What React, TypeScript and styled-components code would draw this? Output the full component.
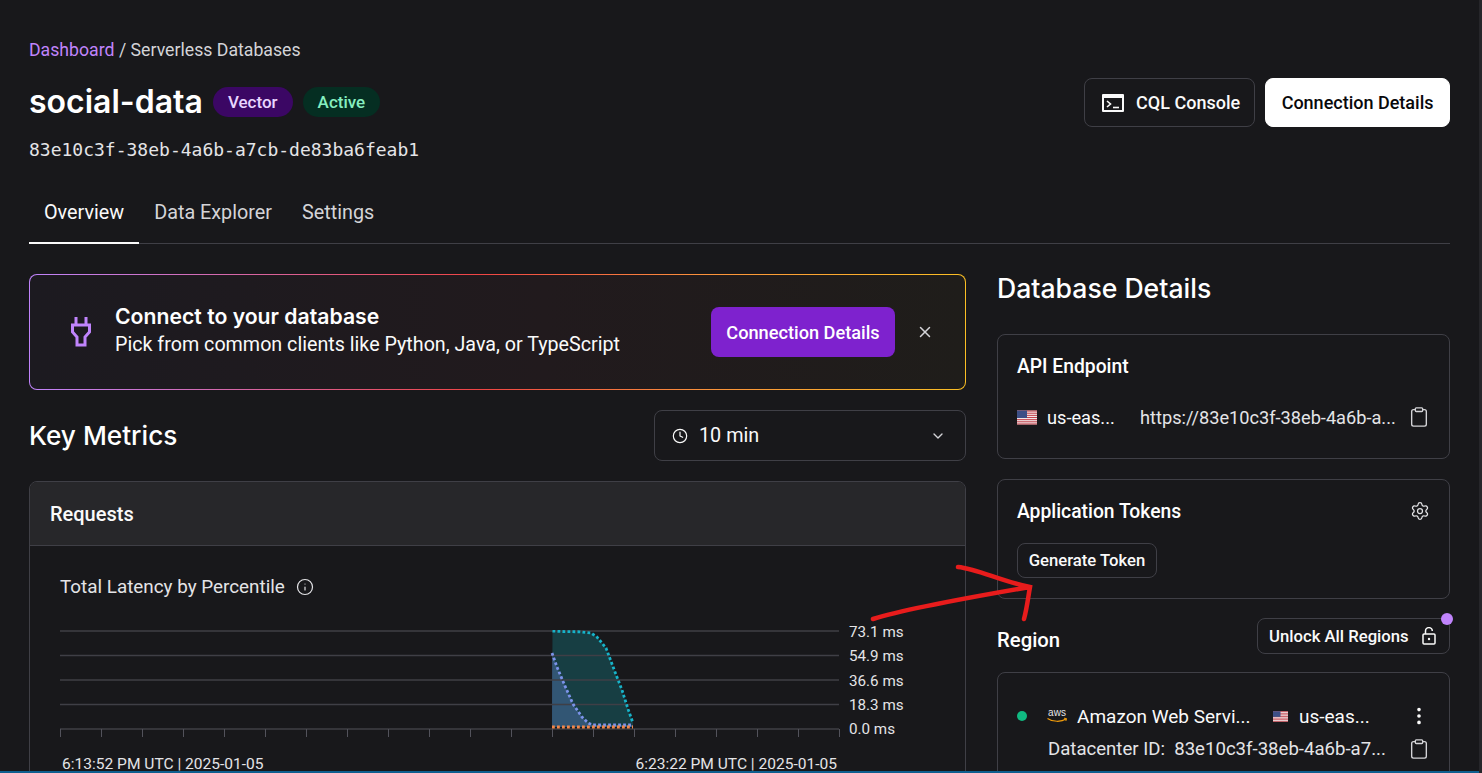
import React from 'react';
import styled, { createGlobalStyle } from 'styled-components';
import { ChevronDown, Clipboard, Clock, EllipsisVertical, Info, Settings, X } from 'lucide-react';

const GlobalStyle = createGlobalStyle`
  html, body {
    margin: 0;
    padding: 0;
    background: #18181b;
    overflow: hidden;
  }
  * {
    box-sizing: border-box;
  }
`;

const Page = styled.div`
  position: relative;
  width: 1482px;
  height: 773px;
  overflow: hidden;
  padding: 40px 32px 0 29px;
  background: #18181b;
  color: #fafafa;
  font-family: Roboto, "Liberation Sans", sans-serif;
`;

const BottomStrip = styled.div`
  position: absolute;
  left: 0;
  right: 0;
  bottom: 0;
  height: 2px;
  background: #0f5f8f;
`;

const RightStrip = styled.div`
  position: absolute;
  top: 0;
  right: 0;
  bottom: 0;
  width: 3px;
  background: #26262a;
`;

const Breadcrumb = styled.div`
  font-size: 17.7px;
  line-height: 20px;
  color: #d4d4d8;
`;

const Crumb = styled.span`
  color: #c084fc;
`;

const HeaderRow = styled.div`
  display: flex;
  justify-content: space-between;
  align-items: flex-start;
  margin-top: 17px;
`;

const TitleBlock = styled.div`
  display: flex;
  flex-direction: column;
`;

const TitleRow = styled.div`
  display: flex;
  align-items: center;
  gap: 10px;
  height: 30px;
  margin-top: 10px;
`;

const Title = styled.h1`
  margin: 0;
  font-family: Inter, sans-serif;
  font-size: 32px;
  line-height: 30px;
  font-weight: 600;
  color: #fff;
`;

const Badge = styled.span<{ $bg: string; $fg: string }>`
  display: inline-flex;
  align-items: center;
  height: 30px;
  padding: 0 15px;
  border-radius: 15px;
  background: ${p => p.$bg};
  color: ${p => p.$fg};
  font-size: 17px;
  font-weight: 500;
`;

const DbId = styled.div`
  margin-top: 22px;
  font-family: "DejaVu Sans Mono", "Liberation Mono", monospace;
  font-size: 18px;
  line-height: 22px;
  color: #e4e4e7;
`;

const HeaderActions = styled.div`
  display: flex;
  gap: 10px;
  margin-top: 1px;
`;

const HeaderButton = styled.button<{ $solid?: boolean }>`
  display: flex;
  align-items: center;
  justify-content: center;
  gap: 12px;
  height: 49px;
  padding: ${p => (p.$solid ? '0 15.5px' : '0 14px 0 17px')};
  border: 1px solid ${p => (p.$solid ? '#fff' : '#3f3f46')};
  border-radius: 8px;
  background: ${p => (p.$solid ? '#fff' : 'transparent')};
  color: ${p => (p.$solid ? '#09090b' : '#fafafa')};
  font-family: inherit;
  font-size: 18px;
  font-weight: 500;
`;

const Tabs = styled.nav`
  display: flex;
  margin-top: 21px;
  height: 62px;
  border-bottom: 1px solid #3f3f46;
`;

const Tab = styled.div<{ $active?: boolean }>`
  display: flex;
  align-items: center;
  height: 62px;
  padding: 0 15px;
  font-size: 19.8px;
  color: ${p => (p.$active ? '#fafafa' : '#d4d4d8')};
  border-bottom: 2px solid ${p => (p.$active ? '#fafafa' : 'transparent')};
`;

const Columns = styled.div`
  display: grid;
  grid-template-columns: 937px 453px;
  column-gap: 31px;
  margin-top: 30px;
`;

const LeftColumn = styled.section`
  display: flex;
  flex-direction: column;
`;

const RightColumn = styled.aside`
  display: flex;
  flex-direction: column;
`;

const Banner = styled.div`
  display: flex;
  align-items: center;
  height: 116px;
  padding: 0 31px 0 40px;
  border: 1px solid transparent;
  border-radius: 8px;
  background:
    linear-gradient(90deg, #1c1a20, #211a1d 55%, #1f1d1a) padding-box,
    linear-gradient(90deg, #c084fc, #ef4444 48%, #fb923c 72%, #fbbf24) border-box;
`;

const BannerText = styled.div`
  flex: 1;
  margin-left: 23px;
  margin-top: -2px;
`;

const BannerTitle = styled.div`
  font-family: Inter, sans-serif;
  font-size: 21.2px;
  line-height: 26px;
  margin-bottom: 2px;
  font-weight: 600;
  color: #fff;
`;

const BannerBody = styled.div`
  font-size: 19.7px;
  line-height: 28px;
  color: #fafafa;
`;

const BannerButton = styled.button`
  height: 50px;
  width: 184px;
  border: none;
  border-radius: 8px;
  background: #7e22ce;
  color: #fff;
  font-family: inherit;
  font-size: 18.2px;
  font-weight: 500;
`;

const CloseSlot = styled.div`
  display: flex;
  margin-left: 21px;
  color: #d4d4d8;
`;

const MetricsBar = styled.div`
  display: flex;
  justify-content: space-between;
  align-items: center;
  margin-top: 20px;
`;

const SectionTitle = styled.h2`
  margin: 0;
  font-family: Inter, sans-serif;
  font-size: 26.2px;
  line-height: 32px;
  font-weight: 500;
  color: #fff;
`;

const RangeSelect = styled.div`
  display: flex;
  align-items: center;
  width: 312px;
  height: 51px;
  padding: 0 19px 0 17px;
  border: 1px solid #3f3f46;
  border-radius: 8px;
  font-size: 19.8px;
  color: #fafafa;
`;

const RangeLabel = styled.span`
  flex: 1;
  margin-left: 11px;
`;

const Panel = styled.div`
  margin-top: 20px;
  height: 340px;
  border: 1px solid #3f3f46;
  border-radius: 8px 8px 0 0;
`;

const PanelHead = styled.div`
  display: flex;
  align-items: center;
  height: 64px;
  padding: 0 20px;
  background: #27272a;
  border-bottom: 1px solid #3f3f46;
  border-radius: 7px 7px 0 0;
  font-size: 20px;
  font-weight: 500;
  color: #fafafa;
`;

const PanelBody = styled.div`
  padding: 30px 30px 0;
`;

const ChartTitle = styled.div`
  display: flex;
  align-items: center;
  gap: 11px;
  height: 22px;
  font-size: 18.85px;
  color: #e4e4e7;
`;

const ChartRow = styled.div`
  display: flex;
  margin-top: 32px;
  height: 118px;
`;

const YLabels = styled.div`
  display: flex;
  flex-direction: column;
  justify-content: space-between;
  width: 70px;
  margin-left: 9px;
  margin-top: -8px;
  height: 117px;
  font-size: 15.2px;
  line-height: 20px;
  color: #e4e4e7;
`;

const TimeLabels = styled.div`
  display: flex;
  justify-content: space-between;
  width: 775px;
  margin-left: 2px;
  margin-top: 7px;
  font-size: 15.55px;
  line-height: 18px;
  color: #e4e4e7;
`;

const DetailsTitle = styled(SectionTitle)`
  font-size: 26.6px;
  margin-top: -2px;
`;

const Card = styled.div`
  margin-top: 20px;
  padding: 20px 19px;
  border: 1px solid #3f3f46;
  border-radius: 8px;
`;

const ApiCard = styled(Card)`
  margin-top: 30px;
  height: 125px;
`;

const TokenCard = styled(Card)`
  height: 120px;
`;

const CardHead = styled.div`
  display: flex;
  justify-content: space-between;
  align-items: center;
  height: 22px;
  font-size: 19.3px;
  font-weight: 500;
  color: #fff;
`;

const EndpointRow = styled.div`
  display: flex;
  align-items: center;
  margin-top: 28px;
  height: 24px;
  font-size: 18.2px;
  color: #fafafa;
`;

const RegionName = styled.span`
  margin-left: 10px;
  width: 93px;
`;

const EndpointUrl = styled.span`
  flex: 1;
  color: #e4e4e7;
  white-space: nowrap;
`;

const GenerateButton = styled.button`
  display: block;
  margin-top: 21px;
  height: 35px;
  width: 140px;
  padding: 0;
  border: 1px solid #3f3f46;
  border-radius: 8px;
  background: transparent;
  color: #fafafa;
  font-family: inherit;
  font-size: 16.7px;
  font-weight: 500;
`;

const RegionHead = styled.div`
  display: flex;
  justify-content: space-between;
  align-items: flex-start;
  margin-top: 19px;
`;

const RegionTitle = styled.h3`
  margin: 10px 0 0;
  font-size: 20.3px;
  line-height: 24px;
  font-weight: 500;
  color: #fff;
`;

const UnlockButton = styled.button`
  position: relative;
  display: flex;
  align-items: center;
  gap: 13px;
  width: 193px;
  height: 36px;
  padding: 0 11px;
  border: 1px solid #3f3f46;
  border-radius: 8px;
  background: transparent;
  color: #fafafa;
  font-family: inherit;
  font-size: 16.7px;
  font-weight: 500;
  white-space: nowrap;
`;

const NoticeDot = styled.span`
  position: absolute;
  top: -6px;
  right: -4px;
  width: 12px;
  height: 12px;
  border-radius: 50%;
  background: #c084fc;
`;

const RegionCard = styled(Card)`
  margin-top: 18px;
  height: 140px;
  padding: 31px 19px 0;
`;

const ProviderRow = styled.div`
  display: flex;
  align-items: center;
  height: 24px;
  font-size: 19px;
  color: #fafafa;
`;

const StatusDot = styled.span`
  width: 10px;
  height: 10px;
  margin-right: 20px;
  border-radius: 50%;
  background: #10b981;
`;

const ProviderName = styled.span`
  width: 196px;
  margin-left: 10px;
`;

const RegionShort = styled.span`
  flex: 1;
  margin-left: 11px;
`;

const DatacenterRow = styled.div`
  display: flex;
  align-items: center;
  height: 24px;
  margin-top: 9px;
  margin-left: 31px;
  font-size: 18.6px;
  color: #e4e4e7;
`;

const DatacenterText = styled.span`
  flex: 1;
  white-space: nowrap;
`;

const Annotation = styled.svg`
  position: absolute;
  left: 0;
  top: 0;
  pointer-events: none;
`;

const TerminalIcon = () => (
  <svg width="22" height="18" viewBox="0 0 22 18">
    <path fill="#fafafa" d="M1 0h20a1 1 0 0 1 1 1v16a1 1 0 0 1-1 1H1a1 1 0 0 1-1-1V1a1 1 0 0 1 1-1zm1 4v12h18V4z" />
    <path d="M5 7l3.5 3L5 13" fill="none" stroke="#fafafa" strokeWidth="1.6" />
    <path d="M11 13.5h6" fill="none" stroke="#fafafa" strokeWidth="1.6" />
  </svg>
);

const PlugIcon = () => (
  <svg width="22" height="32" viewBox="0 0 22 32" fill="none" stroke="#c084fc" strokeWidth="3" style={{ flexShrink: 0 }}>
    <path d="M6 1v8M16 1v8" />
    <path d="M2.500 9h17v7l-4.500 5v8H7v-8l-4.500-5z" />
  </svg>
);

const UsFlag = ({ width, height }: { width: number; height: number }) => (
  <svg width={width} height={height} viewBox="0 0 20 14" style={{ flexShrink: 0 }}>
    <rect width="20" height="14" fill="#f4f0f0" />
    {[0, 2.15, 4.3, 6.45, 8.6, 10.75, 12.9].map(y => (
      <rect key={y} y={y} width="20" height="1.1" fill="#c2454f" />
    ))}
    <rect width="10" height="7.5" fill="#3d4f86" />
  </svg>
);

const AwsLogo = () => (
  <svg width="20" height="16" viewBox="0 0 20 16" style={{ flexShrink: 0 }}>
    <text x="10" y="8" textAnchor="middle" fontFamily="Liberation Sans, sans-serif" fontSize="10" fill="#e4e4e7">aws</text>
    <path d="M0.500 10.500c5 3.600 14 3.600 18.500 .6" fill="none" stroke="#f59e0b" strokeWidth="1.2" />
    <path d="M17 10.200l2.600 .4-.8 2.400" fill="none" stroke="#f59e0b" strokeWidth="1" />
  </svg>
);

const OpenLock = () => (
  <svg width="14" height="18" viewBox="0 0 14 18" fill="none" stroke="#fafafa" strokeWidth="1.5" style={{ flexShrink: 0 }}>
    <rect x="1" y="7" width="12" height="10" rx="1" />
    <path d="M3.500 7V4a3.400 3.400 0 0 1 6.800 0" />
    <circle cx="7" cy="12" r="1.200" fill="#fafafa" stroke="none" />
  </svg>
);

// chart spans x 60-839 on the page, the svg starts at x 60
const gridY = [1, 25.5, 50, 74.5, 99];
const tickX = Array.from({ length: 20 }, (_, i) => i * 41);

const teal = '492.5,1 505,1.6 520,1.8 531,3 537,7 546,18 555,42 562,60 568,79 573,93';
const blue = '492,23 497,37 505,56 513,74 522,87 528,93 533,95 573,95';

const LatencyChart = () => (
  <svg width="780" height="118" viewBox="0 0 780 118" style={{ flexShrink: 0 }}>
    <polygon points={`${teal} 573,97 492,97`} fill="#14b8c4" fillOpacity="0.24" />
    <polygon points={`${blue} 573,97 492,97`} fill="#6f8fe8" fillOpacity="0.3" />
    {gridY.map(y => (
      <line key={y} x1="0" x2="779" y1={y} y2={y} stroke="#3f3f46" strokeWidth="1.5" />
    ))}
    {tickX.map(x => (
      <line key={x} x1={x + 0.5} x2={x + 0.5} y1="99" y2="107" stroke="#52525b" strokeWidth="1" />
    ))}
    <polyline points={teal} fill="none" stroke="#17b3c9" strokeWidth="2.8" strokeDasharray="2.8 2.2" />
    <polyline points={blue} fill="none" stroke="#7c93ea" strokeWidth="2.8" strokeDasharray="2.8 2.2" />
    <line x1="492" x2="573" y1="97" y2="97" stroke="#f2874a" strokeWidth="2.8" strokeDasharray="2.8 2.2" />
  </svg>
);

export default function App() {
  return (
    <Page>
      <GlobalStyle />
      <Breadcrumb>
        <Crumb>Dashboard</Crumb> / Serverless Databases
      </Breadcrumb>
      <HeaderRow>
        <TitleBlock>
          <TitleRow>
            <Title>social-data</Title>
            <Badge $bg="#3b0764" $fg="#e9d5ff">Vector</Badge>
            <Badge $bg="#052e22" $fg="#86efc0">Active</Badge>
          </TitleRow>
          <DbId>83e10c3f-38eb-4a6b-a7cb-de83ba6feab1</DbId>
        </TitleBlock>
        <HeaderActions>
          <HeaderButton>
            <TerminalIcon />
            CQL Console
          </HeaderButton>
          <HeaderButton $solid>Connection Details</HeaderButton>
        </HeaderActions>
      </HeaderRow>
      <Tabs>
        <Tab $active>Overview</Tab>
        <Tab>Data Explorer</Tab>
        <Tab>Settings</Tab>
      </Tabs>
      <Columns>
        <LeftColumn>
          <Banner>
            <PlugIcon />
            <BannerText>
              <BannerTitle>Connect to your database</BannerTitle>
              <BannerBody>Pick from common clients like Python, Java, or TypeScript</BannerBody>
            </BannerText>
            <BannerButton>Connection Details</BannerButton>
            <CloseSlot><X size={18} /></CloseSlot>
          </Banner>
          <MetricsBar>
            <SectionTitle>Key Metrics</SectionTitle>
            <RangeSelect>
              <Clock size={16} strokeWidth={1.8} />
              <RangeLabel>10 min</RangeLabel>
              <ChevronDown size={16} color="#d4d4d8" />
            </RangeSelect>
          </MetricsBar>
          <Panel>
            <PanelHead>Requests</PanelHead>
            <PanelBody>
              <ChartTitle>
                Total Latency by Percentile
                <Info size={18} strokeWidth={1.6} />
              </ChartTitle>
              <ChartRow>
                <LatencyChart />
                <YLabels>
                  <span>73.1 ms</span>
                  <span>54.9 ms</span>
                  <span>36.6 ms</span>
                  <span>18.3 ms</span>
                  <span>0.0 ms</span>
                </YLabels>
              </ChartRow>
              <TimeLabels>
                <span>6:13:52 PM UTC | 2025-01-05</span>
                <span>6:23:22 PM UTC | 2025-01-05</span>
              </TimeLabels>
            </PanelBody>
          </Panel>
        </LeftColumn>
        <RightColumn>
          <DetailsTitle>Database Details</DetailsTitle>
          <ApiCard>
            <CardHead>API Endpoint</CardHead>
            <EndpointRow>
              <UsFlag width={20} height={15} />
              <RegionName>us-eas...</RegionName>
              <EndpointUrl>https://83e10c3f-38eb-4a6b-a...</EndpointUrl>
              <Clipboard size={22} strokeWidth={1.5} color="#d4d4d8" />
            </EndpointRow>
          </ApiCard>
          <TokenCard>
            <CardHead>
              Application Tokens
              <Settings size={20} strokeWidth={1.5} color="#e4e4e7" />
            </CardHead>
            <GenerateButton>Generate Token</GenerateButton>
          </TokenCard>
          <RegionHead>
            <RegionTitle>Region</RegionTitle>
            <UnlockButton>
              Unlock All Regions
              <OpenLock />
              <NoticeDot />
            </UnlockButton>
          </RegionHead>
          <RegionCard>
            <ProviderRow>
              <StatusDot />
              <AwsLogo />
              <ProviderName>Amazon Web Servi...</ProviderName>
              <UsFlag width={15} height={11} />
              <RegionShort>us-eas...</RegionShort>
              <EllipsisVertical size={22} />
            </ProviderRow>
            <DatacenterRow>
              <DatacenterText>Datacenter ID:&nbsp; 83e10c3f-38eb-4a6b-a7...</DatacenterText>
              <Clipboard size={22} strokeWidth={1.5} color="#d4d4d8" />
            </DatacenterRow>
          </RegionCard>
        </RightColumn>
      </Columns>
      <Annotation width="1482" height="773" viewBox="0 0 1482 773">
        <path
          d="M873 619C905 609 960 599 1030 587M958 567C978 569 1000 581 1030 587C1028 598 1027 608 1024 619"
          fill="none"
          stroke="#e81c1c"
          strokeWidth="4.5"
          strokeLinecap="round"
        />
      </Annotation>
      <BottomStrip />
      <RightStrip />
    </Page>
  );
}
